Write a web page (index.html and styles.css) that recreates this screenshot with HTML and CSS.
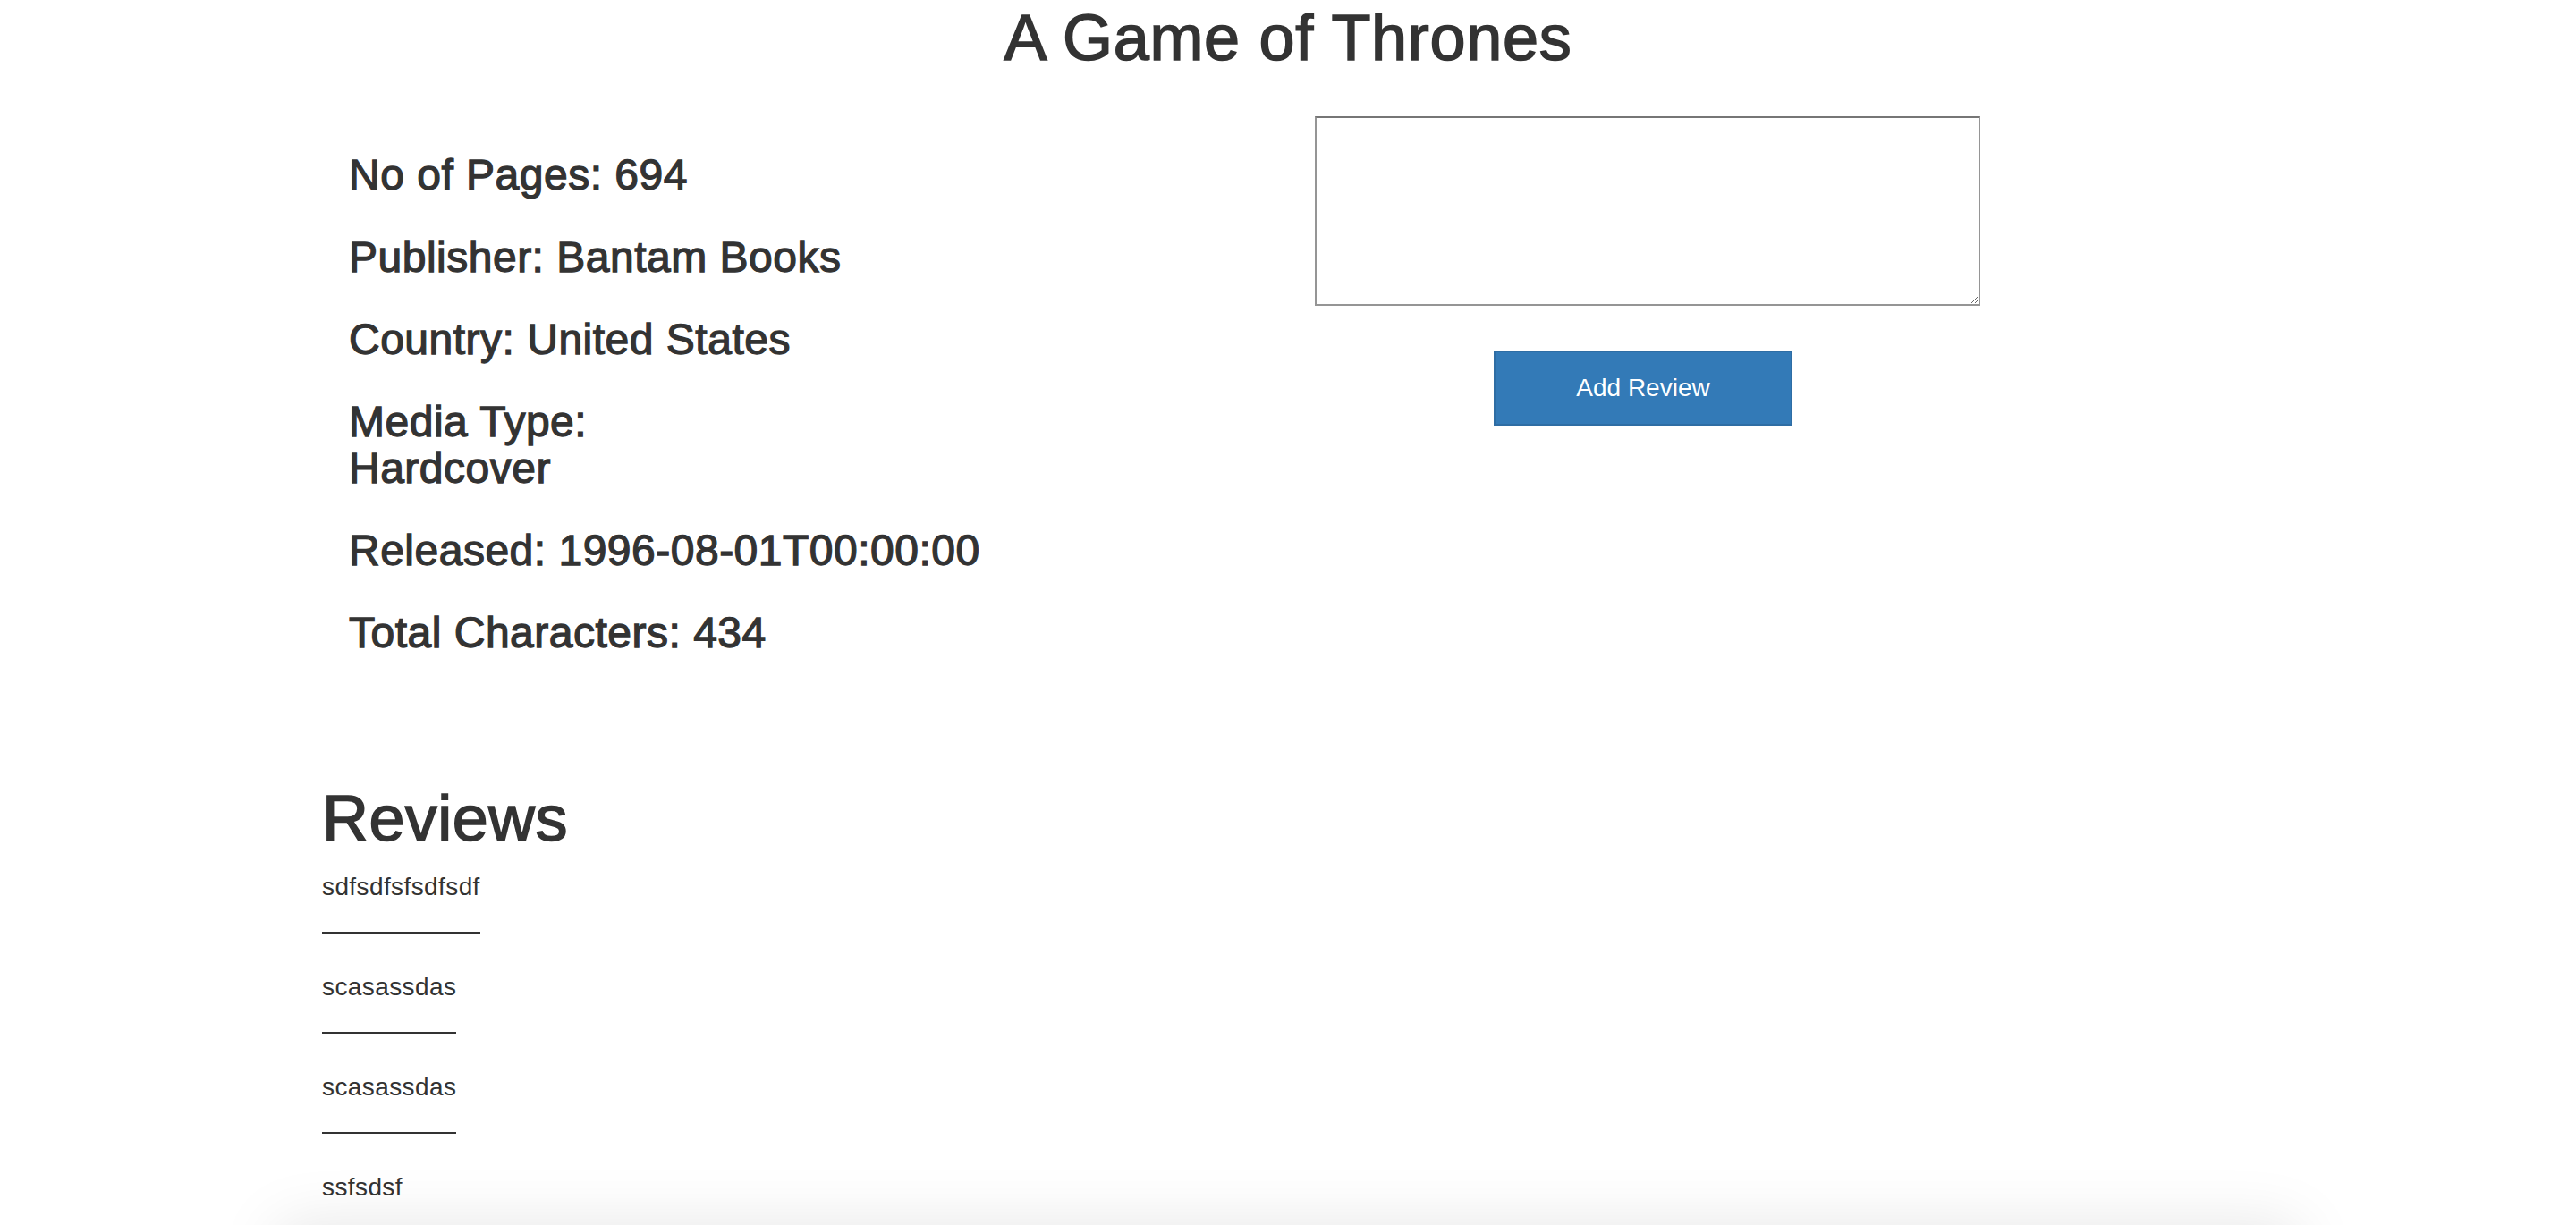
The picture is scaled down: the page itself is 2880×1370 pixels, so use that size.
FILE: index.html
```html
<!DOCTYPE html>
<html lang="en">
<head>
<meta charset="utf-8">
<title>A Game of Thrones</title>
<link rel="stylesheet" href="styles.css">
</head>
<body>
<h1 class="title">A Game of Thrones</h1>
<div class="page">
  <div class="row">
    <div class="col info">
      <h3>No of Pages: 694</h3>
      <h3>Publisher: Bantam Books</h3>
      <h3>Country: United States</h3>
      <h3>Media Type:<br>Hardcover</h3>
      <h3>Released: 1996-08-01T00:00:00</h3>
      <h3>Total Characters: 434</h3>
    </div>
    <div class="col review-form">
      <textarea class="review-input"></textarea>
      <button class="btn-primary" type="button">Add Review</button>
    </div>
  </div>
  <h1 class="reviews-title">Reviews</h1>
  <div class="review"><p>sdfsdfsfsdfsdf</p></div>
  <div class="review"><p>scasassdas</p></div>
  <div class="review"><p>scasassdas</p></div>
  <div class="review"><p>ssfsdsf</p></div>
</div>
<div class="bottom-shadow"></div>
</body>
</html>
```
FILE: styles.css
```css
html, body {
  margin: 0;
  height: 100%;
  overflow: hidden;
}
body {
  font-family: "Liberation Sans", Arial, Helvetica, sans-serif;
  font-size: 28px;
  line-height: 40px;
  color: #333;
  background: #fff;
}
.title {
  margin: 3px 0 48px;
  font-size: 72px;
  line-height: 79px;
  font-weight: 500;
  text-align: center;
  letter-spacing: 0.7px;
  -webkit-text-stroke: 1.6px #333;
}
.page {
  padding: 0 360px;
}
.row {
  display: flex;
}
.col {
  flex: 1 1 0;
  padding: 0 30px;
}
.info h3 {
  margin: 40px 0 20px;
  font-size: 48px;
  line-height: 52px;
  font-weight: 500;
  letter-spacing: 0.5px;
  -webkit-text-stroke: 1.3px #333;
}
.review-form {
  display: flex;
  flex-direction: column;
  align-items: flex-start;
}
.review-input {
  box-sizing: border-box;
  width: 744px;
  height: 212px;
  margin: 0;
  border: 2px solid #959595;
  border-top-color: #767676;
  background: #fff;
  font-family: inherit;
  font-size: 28px;
}
.btn-primary {
  box-sizing: border-box;
  width: 334px;
  height: 84px;
  margin: 50px 0 0 200px;
  padding: 0;
  border: 2px solid #2e6da4;
  border-radius: 0;
  background: #337ab7;
  color: #fff;
  font-family: inherit;
  font-size: 28px;
  line-height: 40px;
}
.reviews-title {
  margin: 122px 0 17px;
  font-size: 72px;
  line-height: 79px;
  font-weight: 500;
  letter-spacing: 0.4px;
  -webkit-text-stroke: 1.6px #333;
}
.review {
  width: fit-content;
  border-bottom: 2px solid #333;
  padding-bottom: 30px;
  margin-bottom: 40px;
}
.review p {
  margin: 0;
  letter-spacing: 0.4px;
}
.bottom-shadow {
  position: fixed;
  left: 310px;
  right: 310px;
  top: 100%;
  height: 200px;
  box-shadow: 0 0 70px rgba(0, 0, 0, 0.1);
}
```
